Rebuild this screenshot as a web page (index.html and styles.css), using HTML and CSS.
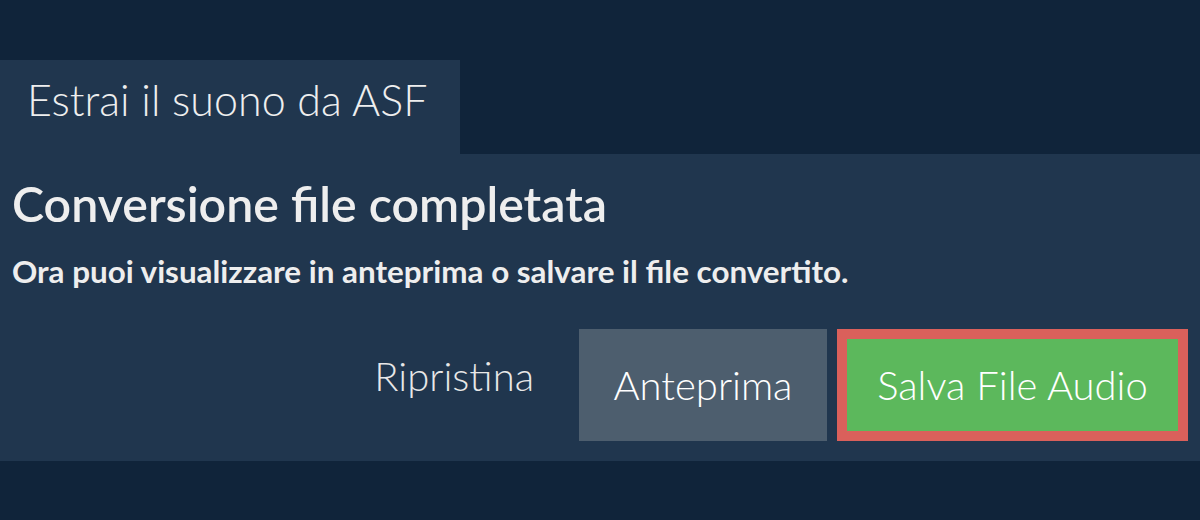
FILE: index.html
```html
<!DOCTYPE html>
<html lang="it">
<head>
<meta charset="utf-8">
<title>Estrai il suono da ASF</title>
<link rel="stylesheet" href="styles.css">
</head>
<body>
<div class="page">
  <div class="tab">Estrai il suono da ASF</div>
  <div class="panel">
    <h1 class="title">Conversione file completata</h1>
    <p class="subtitle">Ora puoi visualizzare in anteprima o salvare il file convertito.</p>
    <div class="actions">
      <button class="btn btn-link">Ripristina</button>
      <button class="btn btn-gray">Anteprima</button>
      <button class="btn btn-green">Salva File Audio</button>
    </div>
  </div>
</div>
</body>
</html>
```

FILE: styles.css
```css
* { box-sizing: border-box; }
html, body {
  margin: 0;
  padding: 0;
  background: #10243a;
  width: 1200px;
  height: 520px;
  overflow: hidden;
  font-family: Lato, "Open Sans", sans-serif;
  color: #eeeeee;
}
.page {
  padding-top: 60px;
}
.tab {
  display: inline-block;
  vertical-align: top;
  width: 460px;
  height: 94px;
  background: #20364e;
  font-size: 43px;
  font-weight: 300;
  line-height: 52px;
  padding: 14px 0 0 27px;
}
.panel {
  background: #20364e;
  height: 307px;
  padding: 0 12px;
  display: flex;
  flex-direction: column;
}
.title {
  margin: 20px 0 0;
  font-size: 48.3px;
  font-weight: 600;
  line-height: 58px;
}
.subtitle {
  margin: 21px 0 0;
  font-size: 31.4px;
  font-weight: 700;
  line-height: 36px;
}
.actions {
  display: flex;
  justify-content: flex-end;
  align-items: center;
  gap: 10px;
  margin-top: 40px;
}
.btn {
  font-family: inherit;
  font-size: 40px;
  font-weight: 300;
  color: #ffffff;
  height: 112px;
  border: 0;
  padding: 0 30px;
  cursor: pointer;
}
.btn-link {
  background: transparent;
  color: #e8e8e8;
  padding: 0 35px 18px;
}
.btn-gray {
  background: #4d5e6e;
  width: 248px;
}
.btn-green {
  background: #5cb85c;
  border: 10px solid #da605b;
  width: 351px;
  padding: 0 20px;
}
```
